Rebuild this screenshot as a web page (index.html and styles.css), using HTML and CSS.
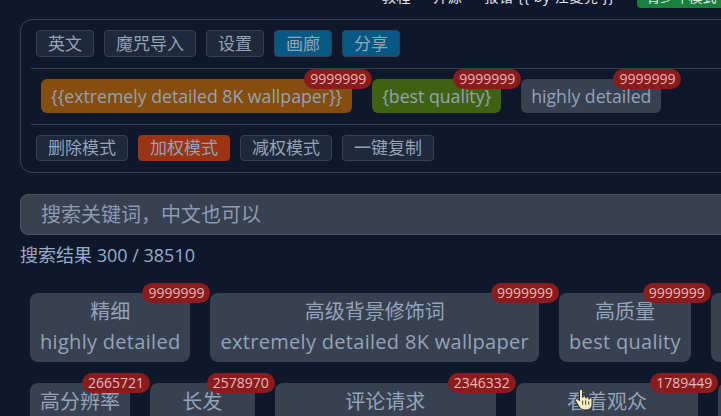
FILE: index.html
```html
<!DOCTYPE html>
<html lang="zh-CN">
<head>
<meta charset="utf-8">
<title>魔咒百科</title>
<link rel="stylesheet" href="styles.css">
</head>
<body>
<div class="page">
  <header class="topbar">
    <a class="nav">教程</a>
    <a class="nav">开源</a>
    <a class="nav">报错 {{ by 江夏尧 }}</a>
    <span class="teen">青少年模式</span>
  </header>

  <section class="panel">
    <div class="row tools">
      <button class="btn">英文</button>
      <button class="btn">魔咒导入</button>
      <button class="btn">设置</button>
      <button class="btn blue">画廊</button>
      <button class="btn blue">分享</button>
    </div>
    <div class="row tags">
      <span class="tag orange">{{extremely detailed 8K wallpaper}}<i class="badge">9999999</i></span>
      <span class="tag green">{best quality}<i class="badge">9999999</i></span>
      <span class="tag grey">highly detailed<i class="badge">9999999</i></span>
    </div>
    <div class="row modes">
      <button class="btn">删除模式</button>
      <button class="btn orange">加权模式</button>
      <button class="btn">减权模式</button>
      <button class="btn">一键复制</button>
    </div>
  </section>

  <input class="search" type="text" placeholder="搜索关键词，中文也可以">
  <p class="count">搜索结果 300 / 38510</p>

  <div class="cards">
    <div class="card"><span class="zh">精细</span><span class="en">highly detailed</span><i class="badge">9999999</i></div>
    <div class="card"><span class="zh">高级背景修饰词</span><span class="en">extremely detailed 8K wallpaper</span><i class="badge">9999999</i></div>
    <div class="card"><span class="zh">高质量</span><span class="en">best quality</span><i class="badge">9999999</i></div>
    <div class="card"><span class="zh">杰作</span><span class="en">masterpiece</span><i class="badge">9999999</i></div>
    <div class="card"><span class="zh">高分辨率</span><span class="en">highres</span><i class="badge">2665721</i></div>
    <div class="card"><span class="zh">长发</span><span class="en">long hair</span><i class="badge">2578970</i></div>
    <div class="card"><span class="zh">评论请求</span><span class="en">commentary request</span><i class="badge">2346332</i></div>
    <div class="card"><span class="zh">看着观众</span><span class="en">looking at viewer</span><i class="badge">1789449</i></div>
    <div class="card"><span class="zh">微笑</span><span class="en">smile</span><i class="badge">1652318</i></div>
    <div class="card"><span class="zh">短发</span><span class="en">short hair</span><i class="badge">1587203</i></div>
  </div>
</div>

<svg class="cursor" width="19" height="25" viewBox="0 0 19 25" aria-hidden="true">
  <path d="M6 1.5c-.9 0-1.6.7-1.6 1.6v9.6l-1.3-1.4c-.6-.6-1.6-.7-2.2-.1-.6.5-.7 1.4-.3 2l3.7 5.9c1.1 1.8 3 2.9 5.1 2.9h2.1c3.1 0 5.6-2.5 5.6-5.6v-5.1c0-.9-.7-1.6-1.6-1.6s-1.5.7-1.5 1.6v-1c0-.9-.7-1.6-1.6-1.6s-1.5.7-1.5 1.6v-.8c0-.9-.7-1.6-1.6-1.6s-1.6.7-1.6 1.6V3.1c0-.9-.7-1.6-1.6-1.6z" fill="#f2edc0" stroke="#1c1c1c" stroke-width="1" stroke-linejoin="round"/>
  <path d="M10.6 12.4v4.3M13.7 13.2v3.5M7.6 12.6v4.1" stroke="#1c1c1c" stroke-width=".8" fill="none"/>
</svg>
</body>
</html>
```

FILE: styles.css
```css
html, body {
  margin: 0;
  overflow: hidden;
  background: #0f172a;
}

body {
  font-family: "Open Sans", "Noto Sans CJK SC", sans-serif;
  color: #94a3b8;
}

.page {
  position: relative;
  width: 900px;
  padding-left: 20px;
}

/* top navigation, scrolled mostly out of view */
.topbar {
  display: flex;
  align-items: center;
  gap: 22px;
  height: 22px;
  margin-top: -14px;
  margin-bottom: 11px;
  padding-left: 362px;
  font-size: 14px;
  color: #e2e8f0;
}

.nav {
  line-height: 22px;
  white-space: nowrap;
  letter-spacing: 0.6px;
}

.teen {
  margin-left: 0;
  padding: 0 10px;
  line-height: 22px;
  border-radius: 4px;
  background: #16803c;
  color: #e5e7eb;
  white-space: nowrap;
}

/* control panel */
.panel {
  width: 880px;
  padding-left: 10px;
  border: 1px solid #334155;
  border-radius: 12px;
}

.row {
  display: flex;
  align-items: center;
  gap: 10px;
  padding: 10px 0 11px 5px;
  border-bottom: 1px solid #334155;
}

.row:last-child {
  border-bottom: 0;
}

.btn {
  box-sizing: border-box;
  height: 27px;
  padding: 0 11px;
  border: 1px solid #334155;
  border-radius: 4px;
  background: #1e293b;
  color: #94a3b8;
  font-family: inherit;
  font-size: 17px;
  line-height: 25px;
}

.modes .btn {
  height: 26px;
  line-height: 24px;
}

.btn.blue {
  background: #075985;
  border-color: #334155;
}

.btn.orange {
  background: #9a3412;
  border-color: #9a3412;
}

.tags {
  gap: 20px;
  padding-left: 10px;
}

.tag {
  position: relative;
  height: 34px;
  padding: 0 10px;
  border-radius: 6px;
  font-size: 17.7px;
  line-height: 34px;
  white-space: nowrap;
}

.tag.orange { background: #854d0e; }
.tag.green { background: #3f6212; }
.tag.grey { background: #374151; }

.badge {
  position: absolute;
  top: 0;
  right: -20px;
  transform: translateY(-50%);
  padding: 0 6px;
  border-radius: 10px;
  background: #8b1c1c;
  color: #e6b9b9;
  font-size: 14px;
  font-style: normal;
  line-height: 20px;
  letter-spacing: 0;
  white-space: nowrap;
}

/* search */
.search {
  display: block;
  box-sizing: border-box;
  width: 880px;
  height: 41px;
  margin-top: 21px;
  padding: 0 0 0 20px;
  border: 1px solid #4b5563;
  border-radius: 8px;
  background: #374151;
  color: #94a3b8;
  font-family: inherit;
  font-size: 20px;
  outline: none;
}

.search::placeholder {
  color: #8d9bb0;
}

.count {
  margin: 8px 0 0;
  font-size: 18px;
  line-height: 25px;
  color: #93aecb;
}

/* result cards */
.cards {
  display: flex;
  flex-wrap: wrap;
  gap: 21px 20px;
  width: 870px;
  margin: 25px 0 0 10px;
}

.card {
  position: relative;
  box-sizing: border-box;
  display: flex;
  flex-direction: column;
  align-items: center;
  height: 69px;
  padding: 4px 10px 5px;
  border-radius: 8px;
  background: #374151;
  white-space: nowrap;
}

.card .zh,
.card .en {
  font-size: 20px;
  line-height: 30px;
}

.card .en {
  letter-spacing: 0.3px;
}

.cursor {
  position: absolute;
  left: 575px;
  top: 388px;
}
```
